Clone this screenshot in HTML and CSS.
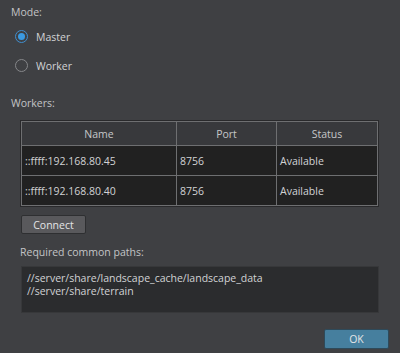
FILE: index.html
```html
<!DOCTYPE html>
<html lang="en">
<head>
  <meta charset="UTF-8">
  <title>Workers</title>
  <link rel="stylesheet" href="styles.css">
</head>
<body>
  <div class="dialog">
    <div class="label mode-label">Mode:</div>

    <label class="radio-row">
      <span class="radio checked"></span>
      <span>Master</span>
    </label>
    <label class="radio-row">
      <span class="radio"></span>
      <span>Worker</span>
    </label>

    <div class="label workers-label">Workers:</div>

    <div class="table-frame">
      <table class="workers">
        <thead>
          <tr>
            <th class="col-name">Name</th>
            <th class="col-port">Port</th>
            <th>Status</th>
          </tr>
        </thead>
        <tbody>
          <tr>
            <td>::ffff:192.168.80.45</td>
            <td>8756</td>
            <td>Available</td>
          </tr>
          <tr>
            <td>::ffff:192.168.80.40</td>
            <td>8756</td>
            <td>Available</td>
          </tr>
        </tbody>
      </table>
    </div>

    <button class="btn connect">Connect</button>

    <div class="label paths-label">Required common paths:</div>
    <div class="paths">
      //server/share/landscape_cache/landscape_data<br>
      //server/share/terrain
    </div>

    <div class="footer">
      <button class="btn ok">OK</button>
    </div>
  </div>
</body>
</html>
```

FILE: styles.css
```css
body {
  margin: 0;
  background: #3f4043;
  font-family: "Open Sans", "Noto Sans", sans-serif;
  font-size: 10.5px;
  color: #d2d3d5;
}
.dialog {
  width: 400px;
  height: 353px;
  box-sizing: border-box;
  padding: 4px 12px 0 11px;
}
.label {
  line-height: 16px;
  color: #c3c4c6;
}
.mode-label {
  margin-bottom: 2px;
}
.radio-row {
  display: flex;
  align-items: center;
  gap: 8px;
  height: 29px;
  padding-left: 4px;
}
.radio {
  width: 11px;
  height: 11px;
  border: 1px solid #86878a;
  border-radius: 50%;
  position: relative;
}
.radio.checked {
  border-color: #3f8fcf;
}
.radio.checked::after {
  content: "";
  position: absolute;
  left: 2px;
  top: 2px;
  width: 7px;
  height: 7px;
  border-radius: 50%;
  background: #3b9ae1;
}
.workers-label {
  margin-top: 15px;
  margin-bottom: 9px;
}
.table-frame {
  margin-left: 9px;
  width: 357px;
  border: 1px solid #29292b;
}
.workers {
  width: 100%;
  border-collapse: collapse;
  border: 1px solid #6e6f71;
}
.workers th,
.workers td {
  border: 1px solid #6e6f71;
  padding: 0 3px;
  text-align: left;
  font-weight: normal;
  white-space: nowrap;
}
.workers thead tr {
  height: 24px;
}
.workers tbody tr {
  height: 30px;
}
.workers th {
  background: #38393c;
  text-align: center;
  color: #c6c7c9;
}
.workers td {
  background: #212121;
}
.col-name {
  width: 148px;
}
.col-port {
  width: 93px;
}
.btn {
  font-family: inherit;
  font-size: 10.5px;
  color: #e4e5e7;
  border: 1px solid #2e2f31;
  border-radius: 2px;
  padding: 0;
}
.connect {
  display: block;
  margin: 8px 0 0 10px;
  width: 65px;
  height: 19px;
  background: #59595c;
}
.paths-label {
  margin-top: 10px;
  margin-left: 9px;
}
.paths {
  margin: 6px 9px 0 10px;
  height: 47px;
  box-sizing: border-box;
  background: #2b2c2e;
  border: 1px solid #37383a;
  padding: 5px 5px;
  line-height: 13px;
}
.footer {
  display: flex;
  justify-content: flex-end;
  margin-top: 16px;
  margin-right: -1px;
}
.ok {
  width: 65px;
  height: 20px;
  background: #467f9e;
  border-color: #2e4a5a;
}
```
